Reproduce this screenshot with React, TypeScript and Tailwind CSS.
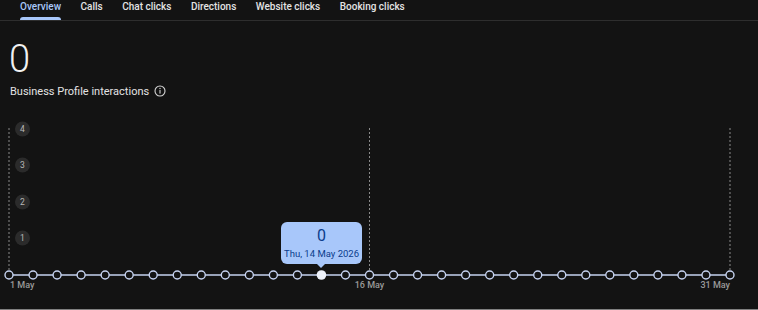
import React from "react";

const tabs = ["Overview", "Calls", "Chat clicks", "Directions", "Website clicks", "Booking clicks"];

const X0 = 9;
const X1 = 730;
const BASE = 274;
const days = Array.from({ length: 31 }, (_, i) => X0 + ((X1 - X0) * i) / 30);
const selected = 13; // 14 May

const InfoIcon = () => (
  <svg width="12" height="12" viewBox="0 0 12 12" className="ml-[5px]">
    <circle cx="6" cy="6" r="5" fill="none" stroke="#d6d6d6" strokeWidth="1.1" />
    <rect x="5.45" y="5" width="1.1" height="3.6" fill="#d6d6d6" />
    <circle cx="6" cy="3.5" r="0.7" fill="#d6d6d6" />
  </svg>
);

const Chart = () => (
  <div className="relative w-[758px] h-[198px]">
    <svg width="758" height="198" viewBox="0 110 758 198" style={{ fontFamily: "Roboto, Arial, sans-serif" }}>
      {[X0, days[15], X1].map((x) => (
        <line key={x} x1={x} x2={x} y1={127} y2={270} stroke="#8a8a8a" strokeWidth="1" strokeDasharray="2 2" />
      ))}
      {[
        [4, 128],
        [3, 164],
        [2, 201],
        [1, 237],
      ].map(([n, y]) => (
        <g key={n}>
          <circle cx={22.5} cy={y} r={7.5} fill="#2b2b2b" />
          <text x={22.5} y={y + 3} textAnchor="middle" fontSize="8.5" fill="#b9b9b9">
            {n}
          </text>
        </g>
      ))}
      <line x1={X0} x2={X1} y1={BASE} y2={BASE} stroke="#c6d3f1" strokeWidth="1.3" />
      {days.map((x, i) =>
        i === selected ? (
          <circle key={i} cx={x} cy={BASE} r={4.8} fill="#eef2fb" />
        ) : (
          <circle key={i} cx={x} cy={BASE} r={4} fill="#131313" stroke="#c6d3f1" strokeWidth="1.4" />
        )
      )}
      <text x={10} y={287} fontSize="9" fill="#9a9a9a" fontWeight="500">1 May</text>
      <text x={days[15]} y={287} textAnchor="middle" fontSize="9" fill="#9a9a9a" fontWeight="500">16 May</text>
      <text x={X1} y={287} textAnchor="end" fontSize="9" fill="#9a9a9a" fontWeight="500">31 May</text>
    </svg>

    {/* tooltip over the selected day */}
    <div className="absolute left-[281px] top-[111px] w-[81px] h-[42px] rounded-[6px] bg-[#a8c7fa] flex flex-col items-center text-[#0b3d8c]">
      <span className="text-[16px] leading-[16px] mt-[6px]">0</span>
      <span className="text-[9.5px] leading-[10px] mt-[5px]">Thu, 14 May 2026</span>
      <div className="absolute left-[35px] bottom-[-4px] w-0 h-0 border-l-[5px] border-r-[5px] border-t-[5px] border-l-transparent border-r-transparent border-t-[#a8c7fa]" />
    </div>
  </div>
);

export default function App() {
  return (
    <div
      className="w-[758px] h-[310px] bg-[#131313] overflow-hidden flex flex-col border-b border-[#808080]"
      style={{ fontFamily: "Roboto, 'Liberation Sans', Arial, sans-serif" }}
    >
      <div className="h-[21px] flex items-stretch gap-[19.5px] pl-[20px] border-b border-[#2e2e2e] shrink-0">
        {tabs.map((t, i) => (
          <div key={t} className="flex flex-col justify-between">
            <span
              className={`pt-[1px] text-[10px] leading-[11px] font-medium ${
                i === 0 ? "text-[#a8c7fa]" : "text-[#e3e3e3]"
              }`}
            >
              {t}
            </span>
            {i === 0 ? <div className="h-[3px] rounded-t-[3px] bg-[#a8c7fa]" /> : <div className="h-[3px]" />}
          </div>
        ))}
      </div>

      <div className="pl-[9px] mt-[19px] text-[38px] leading-[38px] text-[#f1f1f1] font-light">0</div>

      <div className="pl-[10px] mt-[7px] flex items-center text-[11px] leading-[11px] text-[#e3e3e3]">
        Business Profile interactions
        <InfoIcon />
      </div>

      <div className="mt-[14px]">
        <Chart />
      </div>
    </div>
  );
}
